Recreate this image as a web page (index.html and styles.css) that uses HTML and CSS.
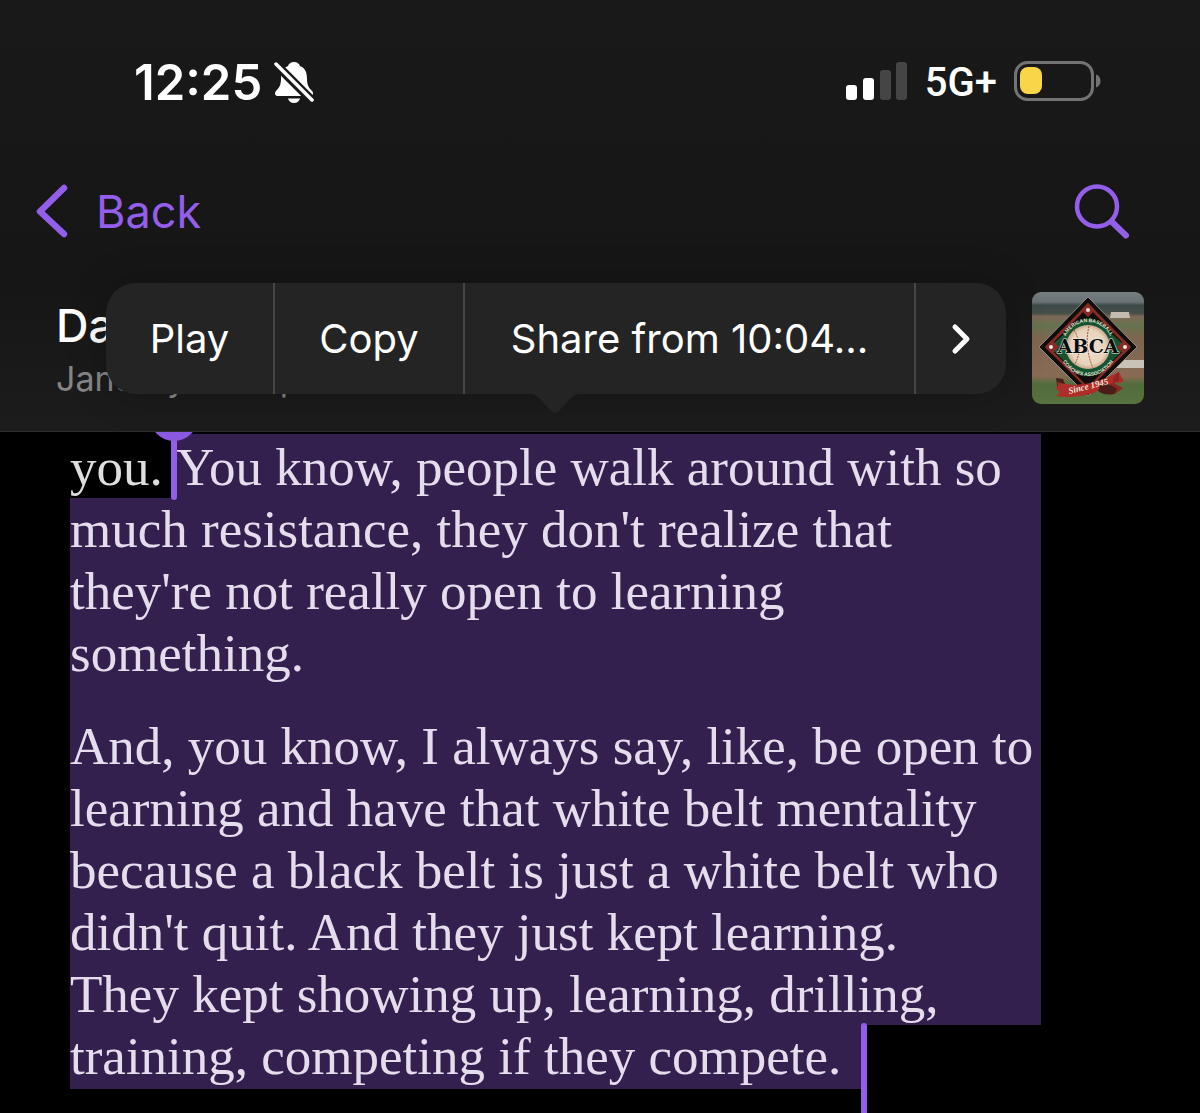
FILE: index.html
```html
<!DOCTYPE html>
<html lang="en">
<head>
<meta charset="utf-8">
<meta name="viewport" content="width=device-width, initial-scale=1">
<title>Transcript</title>
<link rel="stylesheet" href="styles.css">
</head>
<body>
<header class="header">
  <div class="status">
    <div class="status-side">
      <time class="clock">12:25</time>
      <svg class="bell" viewBox="0 0 40 44" width="40" height="44" aria-label="Silent mode">
        <path d="M20 2C16.800 2 14.500 4 14 6C8.500 8 7 13 7 19C7 25 5 28 2 31C0 33.500 1 36 4 36H36C39 36 40 33 38 31C35 28 33 25 33 19C33 13 31.500 8 26 6C25.500 4 23.200 2 20 2Z" fill="#fff"/>
        <path d="M14 38.500H26C25.500 41 23 43 20 43S14.500 41 14 38.500Z" fill="#fff"/>
        <path d="M-1 1.500L40 42.500" stroke="#191919" stroke-width="9"/>
        <path d="M2 4L38 40" stroke="#fff" stroke-width="3.500" stroke-linecap="round"/>
      </svg>
    </div>
    <div class="status-side status-right">
      <svg viewBox="0 0 62 42" width="62" height="42" aria-label="Signal">
        <rect x="0" y="24" width="11" height="15" rx="3" fill="#fff"/>
        <rect x="17" y="17" width="11" height="22" rx="3" fill="#fff"/>
        <rect x="34" y="9" width="11" height="30" rx="3" fill="#454545"/>
        <rect x="50" y="1" width="11" height="38" rx="3" fill="#454545"/>
      </svg>
      <span class="network">5G+</span>
      <svg viewBox="0 0 88 42" width="88" height="42" aria-label="Battery">
        <rect x="1.500" y="1.500" width="77" height="37" rx="12" fill="none" stroke="#737373" stroke-width="3"/>
        <path d="M82 13.500C85 14.500 86.500 17 86.500 20S85 25.500 82 26.500Z" fill="#737373"/>
        <rect x="6" y="6" width="22" height="27" rx="8" fill="#f8d648"/>
      </svg>
    </div>
  </div>

  <nav class="nav">
    <button class="back" type="button">
      <svg viewBox="0 0 34 56" width="34" height="56" aria-hidden="true">
        <path d="M28 5L4 28.500L28 51" fill="none" stroke="currentColor" stroke-width="6.500" stroke-linecap="round" stroke-linejoin="round"/>
      </svg>
      <span>Back</span>
    </button>
    <button class="search" type="button" aria-label="Search">
      <svg viewBox="0 0 56 56" width="56" height="56" aria-hidden="true">
        <circle cx="23" cy="23.500" r="20" fill="none" stroke="currentColor" stroke-width="4.500"/>
        <path d="M37.500 38.500L52 52.500" stroke="currentColor" stroke-width="6" stroke-linecap="round"/>
      </svg>
    </button>
  </nav>

  <section class="episode">
    <div class="episode-text">
      <h1 class="episode-title">Da</h1>
      <p class="episode-date">January 15 · Ep</p>
    </div>
    <svg class="artwork" viewBox="0 0 112 112" width="112" height="112" role="img" aria-label="ABCA">
      <defs>
        <linearGradient id="field" x1="0" y1="0" x2="0" y2="1">
          <stop offset="0" stop-color="#777f82"/>
          <stop offset=".09" stop-color="#687174"/>
          <stop offset=".12" stop-color="#3b4948"/>
          <stop offset=".19" stop-color="#465049"/>
          <stop offset=".22" stop-color="#7e6857"/>
          <stop offset=".3" stop-color="#65724f"/>
          <stop offset=".4" stop-color="#7c6650"/>
          <stop offset=".75" stop-color="#896b54"/>
          <stop offset=".82" stop-color="#526c3d"/>
          <stop offset="1" stop-color="#57733f"/>
        </linearGradient>
        <radialGradient id="ball">
          <stop offset="0" stop-color="#eee0cd"/>
          <stop offset=".8" stop-color="#e8d3bb"/>
          <stop offset="1" stop-color="#c7a98e"/>
        </radialGradient>
        <path id="arc-top" d="M31 55A25 25 0 0 1 81 55"/>
        <path id="arc-bottom" d="M27 55A29 29 0 0 0 85 55"/>
      </defs>
      <rect width="112" height="112" rx="9" fill="url(#field)"/>
      <path d="M79 20H97L98 26H78Z" fill="#c3bbb0"/>
      <path d="M90 68H112V76H84Z" fill="#c9c2b6"/>
      <path d="M56 5L105 55L56 104L7 55Z" fill="#100d0c" stroke="#8d8d87" stroke-width="1"/>
      <path d="M56 11L99 55L56 98L13 55Z" fill="#862b25"/>
      <path d="M56 15L95 55L56 95L17 55Z" fill="#100d0c"/>
      <path d="M41 34Q56 19 71 34L91 52V58L71 78Q56 91 41 78L21 58V52Z" fill="#155331"/>
      <path d="M49 18L56 11L63 18L56 25ZM13 55L20 48L27 55L20 62ZM99 55L92 48L85 55L92 62Z" fill="#862b25"/>
      <circle cx="56" cy="55" r="22" fill="url(#ball)"/>
      <path d="M42 38Q52 55 43 72M57 34Q52 55 61 76" fill="none" stroke="#a94e3e" stroke-width="1" stroke-dasharray="2 1"/>
      <g fill="#f0e5dc"><circle cx="56" cy="18" r="2"/><circle cx="19" cy="55" r="2"/><circle cx="93" cy="55" r="2"/></g>
      <text class="art-ring"><textPath href="#arc-top" startOffset="50%" text-anchor="middle">AMERICAN BASEBALL</textPath></text>
      <text class="art-ring"><textPath href="#arc-bottom" startOffset="50%" text-anchor="middle">COACHES ASSOCIATION</textPath></text>
      <text class="art-name" x="56" y="61" text-anchor="middle">ABCA</text>
      <path d="M24 86L31 87L35 97L26 98Z" fill="#45211b"/>
      <path d="M23 96Q28 94 25 90Q50 99 87 80L92 90Q72 91 64 100Q45 107 24 104L28 100Z" fill="#ae2d29"/>
      <path d="M87 80Q76 89 85 93L91 96L83 102L70 100Q75 91 87 89Z" fill="#8e2520"/>
      <path d="M69 91Q79 92 85 97L82 102Q73 104 66 99Z" fill="#4b1d19"/>
      <text class="art-since" x="57" y="97" text-anchor="middle" transform="rotate(-14 57 97)">Since 1945</text>
    </svg>

    <div class="menu" role="toolbar" aria-label="Selection actions">
      <button class="menu-item" type="button">Play</button>
      <button class="menu-item" type="button">Copy</button>
      <button class="menu-item" type="button">Share from 10:04...</button>
      <button class="menu-item" type="button" aria-label="More">
        <svg viewBox="0 0 20 32" width="20" height="32" aria-hidden="true">
          <path d="M4 4L16 16L4 28" fill="none" stroke="#fff" stroke-width="5" stroke-linecap="round" stroke-linejoin="round"/>
        </svg>
      </button>
      <svg class="menu-arrow" viewBox="0 0 60 22" width="60" height="22" aria-hidden="true">
        <path d="M0 0H60C53 0 49 2 45 6L34 18Q30 22 26 18L15 6C11 2 7 0 0 0Z" fill="#242424"/>
      </svg>
    </div>
  </section>
</header>

<main class="transcript">
  <p class="paragraph">
    <span class="line line-first"><span class="plain">you.</span><mark class="selected selected-start"><span class="handle handle-start"></span>You know, people walk around with so</mark></span>
    <mark class="line selected">much resistance, they don't realize that</mark>
    <mark class="line selected">they're not really open to learning</mark>
    <mark class="line selected">something.</mark>
  </p>
  <p class="paragraph paragraph-next">
    <mark class="line selected">And, you know, I always say, like, be open to</mark>
    <mark class="line selected">learning and have that white belt mentality</mark>
    <mark class="line selected">because a black belt is just a white belt who</mark>
    <mark class="line selected">didn't quit. And they just kept learning.</mark>
    <mark class="line selected">They kept showing up, learning, drilling,</mark>
    <mark class="line selected selected-end">training, competing if they compete.<span class="handle handle-end"></span></mark>
  </p>
</main>
</body>
</html>
```
FILE: styles.css
```css
* {
  box-sizing: border-box;
}

body {
  margin: 0;
  min-height: 100vh;
  display: flex;
  flex-direction: column;
  background: #000;
  color: #fff;
  font-family: Inter, "Liberation Sans", sans-serif;
}

button {
  border: 0;
  padding: 0;
  background: none;
  color: inherit;
  font: inherit;
}

svg {
  display: block;
  flex: none;
}

/* Header */

.header {
  background: linear-gradient(#191919, #161616 65%, #1c1c1d);
  border-bottom: 1px solid #2b2b2b;
}

.status {
  display: flex;
  justify-content: space-between;
  align-items: center;
  height: 164px;
  padding: 0 98px 0 134px;
}

.status-side {
  display: flex;
  align-items: center;
  gap: 12px;
}

.status-right {
  gap: 17px;
}

.clock {
  font-size: 49px;
  font-weight: 600;
}

.network {
  font-family: Roboto, sans-serif;
  font-size: 40px;
  font-weight: 500;
}

.nav {
  display: flex;
  justify-content: space-between;
  align-items: center;
  height: 94px;
  padding: 0 70px 0 36px;
  color: #935fea;
}

.back {
  display: flex;
  align-items: center;
  gap: 26px;
  font-size: 45px;
}

.episode {
  position: relative;
  display: flex;
  justify-content: space-between;
  align-items: flex-start;
  height: 173px;
  padding: 34px 56px 0 56px;
}

.episode-title {
  margin: 6px 0 0;
  font-size: 45px;
  font-weight: 500;
  line-height: 56px;
}

.episode-date {
  margin: 5px 0 0;
  font-size: 34px;
  line-height: 40px;
  color: #858588;
}

.art-ring {
  font: 700 5px "Liberation Sans", sans-serif;
  fill: #e5e5d8;
}

.art-name {
  font: 700 19px "DejaVu Serif", serif;
  fill: #0c0c0c;
  stroke: #eee;
  stroke-width: 1px;
  paint-order: stroke;
}

.art-since {
  font: italic 700 9px "Liberation Serif", serif;
  fill: #f4e8df;
}

/* Selection menu */

.menu {
  position: absolute;
  top: 25px;
  left: 106px;
  right: 194px;
  height: 111px;
  display: grid;
  grid-template-columns: 169px 190px 1fr 90px;
  border-radius: 30px;
  background: #242424;
  box-shadow: 0 0 40px rgba(0, 0, 0, 0.2);
}

.menu-item {
  display: flex;
  justify-content: center;
  align-items: center;
  font-size: 40px;
}

.menu-item:not(:nth-of-type(4)) {
  border-right: 2px solid #464646;
}

.menu-arrow {
  position: absolute;
  top: 110px;
  left: 419px;
}

/* Transcript */

.transcript {
  flex: 1;
  overflow: hidden;
  padding: 2px 159px 24px 70px;
  font-family: "Liberation Serif", serif;
  font-size: 53px;
  line-height: 62px;
  color: #dededc;
}

.paragraph {
  margin: 0;
  white-space: nowrap;
}

.paragraph-next {
  padding-top: 31px;
  background: linear-gradient(#33204f, #33204f) top / 100% 31px no-repeat;
}

.line {
  display: block;
}

.line-first {
  display: flex;
}

.plain {
  width: 106px;
  padding-top: 2px;
}

.selected {
  background: #33204f;
  color: #e5dcec;
}

.selected-start {
  position: relative;
  flex: 1;
  padding-top: 2px;
}

.selected-end {
  position: relative;
  width: fit-content;
  padding: 0 20px 2px 0;
}

.handle {
  position: absolute;
  width: 6px;
  border-radius: 3px;
  background: #935fea;
}

.handle-start {
  top: -2px;
  left: -5px;
  height: 68px;
}

.handle-start::before {
  content: "";
  position: absolute;
  top: -39px;
  left: -21px;
  width: 48px;
  height: 48px;
  border-radius: 50%;
  background: #8b58e0;
}

.handle-end {
  top: -2px;
  right: -6px;
  height: 96px;
}
```
